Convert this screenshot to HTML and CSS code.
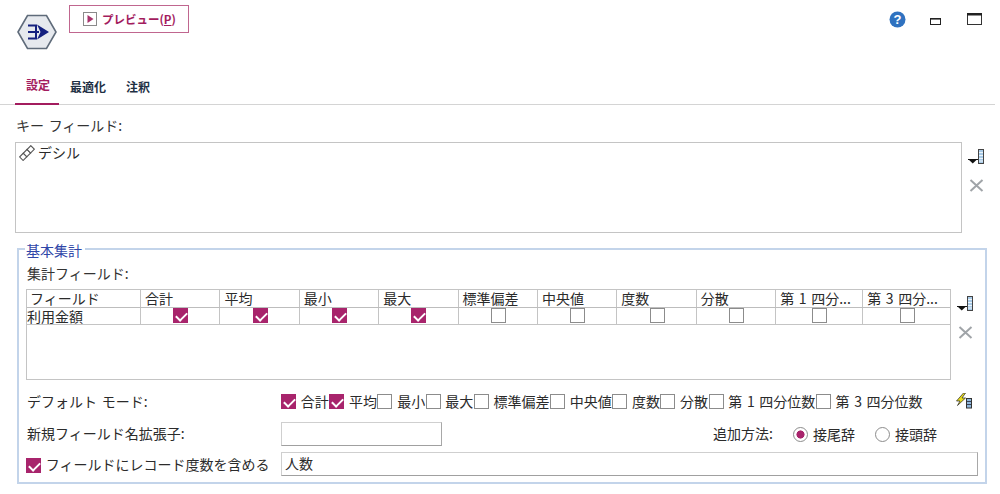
FILE: index.html
```html
<!DOCTYPE html>
<html lang="ja">
<head>
<meta charset="utf-8">
<title>集計</title>
<link rel="stylesheet" href="styles.css">
</head>
<body>
<header class="top">
  <svg class="node" width="40" height="36" viewBox="0 0 40 36">
    <path d="M1 18 L10.5 1.5 H29.5 L39 18 L29.5 34.5 H10.5 Z" fill="#e6e9ee" stroke="#5f6b7a" stroke-width="1.6"/>
    <path d="M11 11.5 H19 M11 18 H22 M11 24.5 H19 M19 10.5 V25.5" stroke="#14207f" stroke-width="2" fill="none"/>
    <path d="M20 10.5 L32 18 L20 25.5 L23.5 18 Z" fill="#14207f"/>
  </svg>
  <button class="preview" type="button">
    <svg width="14" height="14" viewBox="0 0 14 14"><rect x=".5" y=".5" width="13" height="13" fill="#fff" stroke="#8a8a8a"/><path d="M4.5 3 L10.5 7 L4.5 11 Z" fill="#a8336c"/></svg>
    <span>プレビュー(<u>P</u>)</span>
  </button>
  <div class="win">
    <svg class="help" width="17" height="17" viewBox="0 0 17 17"><circle cx="8.5" cy="8.5" r="8" fill="#2f72c0"/><text x="8.5" y="13" text-anchor="middle" class="q">?</text></svg>
    <svg class="min" width="11" height="7" viewBox="0 0 11 7"><rect x=".5" y=".5" width="10" height="6" fill="#fff" stroke="#222"/><rect width="11" height="1.6" fill="#222"/></svg>
    <svg class="max" width="15" height="12" viewBox="0 0 15 12"><rect x=".5" y=".5" width="14" height="11" fill="#fff" stroke="#333"/><rect width="15" height="2.5" fill="#222"/></svg>
  </div>
</header>
<nav class="tabs">
  <a class="tab active">設定</a>
  <a class="tab">最適化</a>
  <a class="tab">注釈</a>
</nav>
<main class="content">
  <div class="label key-label">キー フィールド:</div>
  <div class="key-row">
    <div class="keybox">
      <svg width="16" height="16" viewBox="0 0 16 16"><g transform="rotate(-45 8 8)" fill="#fff" stroke="#555" stroke-width="1.1"><rect x="0" y="5.5" width="5.3" height="5"/><rect x="5.3" y="5.5" width="5.3" height="5"/><rect x="10.6" y="5.5" width="5.3" height="5"/></g></svg>
      <span>デシル</span>
    </div>
    <div class="side">
      <svg class="pick" width="16" height="15" viewBox="0 0 16 15"><use href="#picker"/></svg>
      <svg class="del" width="15" height="13" viewBox="0 0 15 13"><path d="M1.5 1 L13.5 12 M13.5 1 L1.5 12" stroke="#a0a4a8" stroke-width="2"/></svg>
    </div>
  </div>
  <section class="group">
    <div class="legend">基本集計</div>
    <div class="label agg-label">集計フィールド:</div>
    <div class="table-row">
      <div class="grid">
        <div class="row head">
          <div class="c first">フィールド</div><div class="c">合計</div><div class="c">平均</div><div class="c">最小</div><div class="c">最大</div><div class="c">標準偏差</div><div class="c">中央値</div><div class="c">度数</div><div class="c">分散</div><div class="c wide">第 1 四分...</div><div class="c wide2">第 3 四分...</div>
        </div>
        <div class="row body">
          <div class="c first cell">利用金額</div>
          <div class="c mid"><i class="box on"></i></div><div class="c mid"><i class="box on"></i></div><div class="c mid"><i class="box on"></i></div><div class="c mid"><i class="box on"></i></div>
          <div class="c mid"><i class="box"></i></div><div class="c mid"><i class="box"></i></div><div class="c mid"><i class="box"></i></div><div class="c mid"><i class="box"></i></div><div class="c mid wide"><i class="box"></i></div><div class="c mid wide2"><i class="box"></i></div>
        </div>
      </div>
      <div class="side">
        <svg class="pick" width="16" height="15" viewBox="0 0 16 15"><use href="#picker"/></svg>
        <svg class="del" width="15" height="13" viewBox="0 0 15 13"><path d="M1.5 1 L13.5 12 M13.5 1 L1.5 12" stroke="#a0a4a8" stroke-width="2"/></svg>
      </div>
    </div>
    <div class="mode-row">
      <div class="rowlabel">デフォルト モード:</div>
      <div class="checks">
        <label class="chk"><i class="box on"></i>合計</label>
        <label class="chk"><i class="box on"></i>平均</label>
        <label class="chk"><i class="box"></i>最小</label>
        <label class="chk"><i class="box"></i>最大</label>
        <label class="chk"><i class="box"></i>標準偏差</label>
        <label class="chk"><i class="box"></i>中央値</label>
        <label class="chk"><i class="box"></i>度数</label>
        <label class="chk"><i class="box"></i>分散</label>
        <label class="chk"><i class="box"></i>第 1 四分位数</label>
        <label class="chk"><i class="box"></i>第 3 四分位数</label>
      </div>
      <svg class="bolt" width="16" height="16" viewBox="0 0 16 16"><path d="M7.5 0 L0.5 8 H4 L1.5 12.5 L9.5 5 H6 L9.5 0 Z" fill="#e8dc1c" stroke="#222" stroke-width=".7"/><rect x="10.5" y="5.5" width="5" height="9.5" fill="#8fb8dc" stroke="#333"/><path d="M11 8.5 H15 M11 11.5 H15" stroke="#223" stroke-width=".8"/></svg>
    </div>
    <div class="ext-row">
      <div class="rowlabel">新規フィールド名拡張子:</div>
      <div class="input short"></div>
      <div class="method">
        <span class="mlabel">追加方法:</span>
        <label class="radio"><i class="dot on"></i>接尾辞</label>
        <label class="radio"><i class="dot"></i>接頭辞</label>
      </div>
    </div>
    <div class="count-row">
      <label class="chk count"><i class="box on"></i>フィールドにレコード度数を含める</label>
      <div class="input long">人数</div>
    </div>
  </section>
</main>
<svg class="defs" width="0" height="0">
  <defs>
    <g id="picker">
      <path d="M0 10 H9.5 L4.75 14.5 Z" fill="#111"/>
      <path d="M0 10.5 H10.5 V0.5" stroke="#111" stroke-width="1" fill="none"/>
      <rect x="10.5" y="0.5" width="5" height="14" fill="#a9cbe8" stroke="#444"/>
      <path d="M11 3.5 H15 M11 6.5 H15 M11 9.5 H15 M11 12 H15" stroke="#fff" stroke-width=".8"/>
    </g>
  </defs>
</svg>
</body>
</html>
```
FILE: styles.css
```css
* { box-sizing: border-box; }
html, body { margin: 0; padding: 0; }
body {
  width: 1000px;
  height: 494px;
  overflow: hidden;
  background: #fff;
  color: #2b2b2b;
  font-family: "Noto Sans CJK JP", "Liberation Sans", sans-serif;
  font-size: 14px;
  font-weight: 400;
  line-height: 18px;
  word-spacing: 1.5px;
}
.defs { position: absolute; }
.top {
  height: 72px;
  display: flex;
  align-items: flex-start;
  padding: 5px 0 0 17px;
}
.node { margin-top: 9px; flex: none; }
.preview {
  margin-left: 12px;
  width: 120px;
  height: 28px;
  padding: 0 0 0 13px;
  display: flex;
  align-items: center;
  gap: 5px;
  background: #fff;
  border: 1px solid #c0668f;
  color: #a31c5e;
  font: 700 11.5px/16px "Noto Sans CJK JP", sans-serif;
}
.win { margin-left: auto; display: flex; align-items: flex-start; padding-right: 18px; padding-top: 6px; }
.help { margin-right: 24px; }
.q { font: 700 13px "Liberation Sans", sans-serif; fill: #fff; }
.min { margin-top: 7px; margin-right: 26px; }
.max { margin-top: 2px; }
.tabs {
  width: 995px;
  height: 33px;
  display: flex;
  padding-left: 15px;
  border-bottom: 1px solid #d4d4d4;
}
.tab {
  height: 32px;
  padding: 6px 0 0;
  color: #1e3044;
  font-weight: 700;
  font-size: 12px;
  width: 56px;
  text-align: left;
}
.tab.active {
  width: 44px;
  padding-left: 11px;
  margin-right: 11px;
  color: #a31c5e;
  height: 33px;
  border-bottom: 2px solid #a31c5e;
  padding-top: 4px;
}
.label { color: #333; }
.key-label { margin: 11px 0 0 16px; height: 26px; }
.key-row { display: flex; height: 106px; padding-left: 15px; }
.keybox {
  width: 947px;
  height: 91px;
  border: 1px solid #c4c4c4;
  padding: 0 0 0 3px;
  display: flex;
  align-items: flex-start;
  gap: 3px;
}
.keybox svg { margin-top: 2px; }
.side { display: flex; flex-direction: column; align-items: center; width: 30px; padding: 7px 2px 0 0; }
.del { margin-top: 15px; }
.group {
  position: relative;
  margin-left: 17px;
  width: 970px;
  height: 236px;
  border: 2px solid #c3d4ea;
  padding: 0 0 0 7px;
}
.legend {
  position: absolute;
  left: 6px;
  top: -9px;
  padding: 0 3px 0 1px;
  background: #fff;
  color: #2f46a8;
}
.agg-label { padding: 14px 0 0 1px; height: 39px; line-height: 18px; }
.table-row { display: flex; height: 91px; }
.grid {
  width: 925px;
  height: 91px;
  border: 1px solid #c4c4c4;
}
.row { display: flex; }
.head { height: 18px; border-bottom: 1px solid #bdbdbd; }
.body { height: 17px; border-bottom: 1px solid #c4c4c4; }
.c {
  width: 79.4px;
  flex: none;
  border-right: 1px solid #c4c4c4;
  padding-left: 4px;
  white-space: nowrap;
  line-height: 16px;
}
.c.first { width: 114px; padding-left: 3px; }
.c.cell { padding-left: 0; line-height: 16px; }
.c.wide { width: 87px; }
.c.wide2 { width: 87px; border-right: 0; }
.mid { display: flex; justify-content: center; padding-left: 1px; }
.box {
  display: block;
  flex: none;
  width: 15px;
  height: 15px;
  background: #fff;
  border: 1px solid #8c8c8c;
}
.box.on {
  border: 0;
  background: #a8246c;
  position: relative;
}
.box.on::after {
  content: "";
  position: absolute;
  left: 5px;
  top: 2px;
  width: 5px;
  height: 9px;
  border: solid #fff;
  border-width: 0 2px 2px 0;
  transform: rotate(45deg);
}
.mode-row { display: flex; align-items: center; height: 42px; padding-bottom: 1px; }
.rowlabel { width: 255px; flex: none; padding-left: 1px; }
.ext-row .rowlabel, .mlabel { padding-bottom: 2px; }
.checks { display: flex; width: 672px; }
.chk { display: flex; align-items: center; white-space: nowrap; gap: 4.8px; margin-right: .4px; }
.chk .box { margin-top: 2px; }
.bolt { margin-left: 3px; }
.ext-row { display: flex; align-items: center; height: 24px; }
.input { height: 24px; border: 1px solid #cfcfcf; border-right-color: #a8a8a8; border-bottom-color: #a0a0a0; background: #fff; }
.short { width: 161px; }
.method { display: flex; align-items: center; margin-left: 271px; }
.mlabel { width: 80px; flex: none; }
.radio { display: flex; align-items: center; gap: 5px; width: 82px; flex: none; line-height: 18px; padding-bottom: 1px; }
.dot {
  display: block;
  width: 15px;
  height: 15px;
  margin-top: 2px;
  border: 1px solid #8c8c8c;
  border-radius: 50%;
  background: #fff;
  flex: none;
}
.dot.on { background: radial-gradient(circle, #a8246c 0 3.8px, #fff 4.3px); }
.count-row { display: flex; align-items: center; height: 24px; margin-top: 6px; }
.count { width: 255px; flex: none; margin: 0; }
.long { width: 697px; padding-left: 3px; line-height: 20px; }
```
